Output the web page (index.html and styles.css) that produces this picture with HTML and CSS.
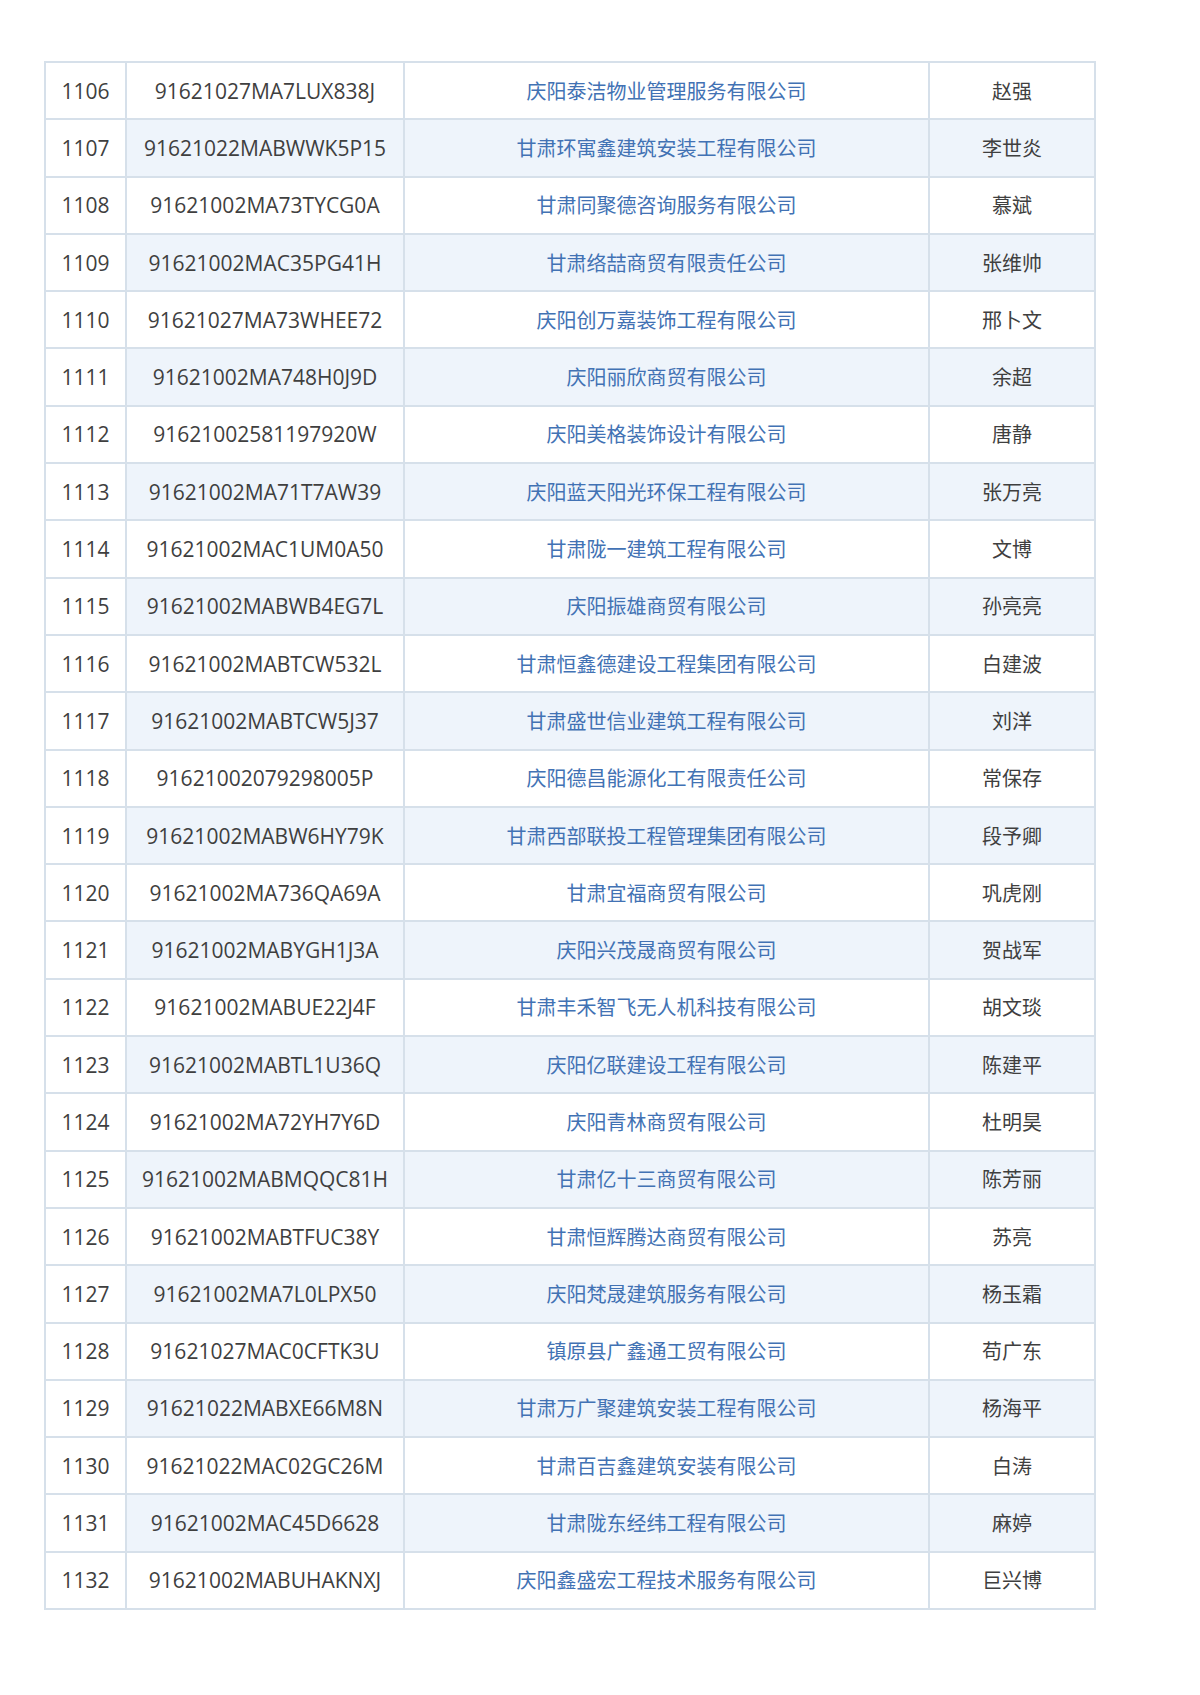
FILE: index.html
```html
<!DOCTYPE html>
<html lang="zh-CN">
<head>
<meta charset="utf-8">
<title>名单</title>
<link rel="stylesheet" href="styles.css">
</head>
<body>
<div class="page">
<table class="list">
<colgroup><col class="c-no"><col class="c-code"><col class="c-name"><col class="c-person"></colgroup>
<tbody>
<tr><td>1106</td><td>91621027MA7LUX838J</td><td class="co">庆阳泰洁物业管理服务有限公司</td><td class="pn">赵强</td></tr>
<tr><td>1107</td><td>91621022MABWWK5P15</td><td class="co">甘肃环寓鑫建筑安装工程有限公司</td><td class="pn">李世炎</td></tr>
<tr><td>1108</td><td>91621002MA73TYCG0A</td><td class="co">甘肃同聚德咨询服务有限公司</td><td class="pn">慕斌</td></tr>
<tr><td>1109</td><td>91621002MAC35PG41H</td><td class="co">甘肃络喆商贸有限责任公司</td><td class="pn">张维帅</td></tr>
<tr><td>1110</td><td>91621027MA73WHEE72</td><td class="co">庆阳创万嘉装饰工程有限公司</td><td class="pn">邢卜文</td></tr>
<tr><td>1111</td><td>91621002MA748H0J9D</td><td class="co">庆阳丽欣商贸有限公司</td><td class="pn">余超</td></tr>
<tr><td>1112</td><td>91621002581197920W</td><td class="co">庆阳美格装饰设计有限公司</td><td class="pn">唐静</td></tr>
<tr><td>1113</td><td>91621002MA71T7AW39</td><td class="co">庆阳蓝天阳光环保工程有限公司</td><td class="pn">张万亮</td></tr>
<tr><td>1114</td><td>91621002MAC1UM0A50</td><td class="co">甘肃陇一建筑工程有限公司</td><td class="pn">文博</td></tr>
<tr><td>1115</td><td>91621002MABWB4EG7L</td><td class="co">庆阳振雄商贸有限公司</td><td class="pn">孙亮亮</td></tr>
<tr><td>1116</td><td>91621002MABTCW532L</td><td class="co">甘肃恒鑫德建设工程集团有限公司</td><td class="pn">白建波</td></tr>
<tr><td>1117</td><td>91621002MABTCW5J37</td><td class="co">甘肃盛世信业建筑工程有限公司</td><td class="pn">刘洋</td></tr>
<tr><td>1118</td><td>91621002079298005P</td><td class="co">庆阳德昌能源化工有限责任公司</td><td class="pn">常保存</td></tr>
<tr><td>1119</td><td>91621002MABW6HY79K</td><td class="co">甘肃西部联投工程管理集团有限公司</td><td class="pn">段予卿</td></tr>
<tr><td>1120</td><td>91621002MA736QA69A</td><td class="co">甘肃宜福商贸有限公司</td><td class="pn">巩虎刚</td></tr>
<tr><td>1121</td><td>91621002MABYGH1J3A</td><td class="co">庆阳兴茂晟商贸有限公司</td><td class="pn">贺战军</td></tr>
<tr><td>1122</td><td>91621002MABUE22J4F</td><td class="co">甘肃丰禾智飞无人机科技有限公司</td><td class="pn">胡文琰</td></tr>
<tr><td>1123</td><td>91621002MABTL1U36Q</td><td class="co">庆阳亿联建设工程有限公司</td><td class="pn">陈建平</td></tr>
<tr><td>1124</td><td>91621002MA72YH7Y6D</td><td class="co">庆阳青林商贸有限公司</td><td class="pn">杜明昊</td></tr>
<tr><td>1125</td><td>91621002MABMQQC81H</td><td class="co">甘肃亿十三商贸有限公司</td><td class="pn">陈芳丽</td></tr>
<tr><td>1126</td><td>91621002MABTFUC38Y</td><td class="co">甘肃恒辉腾达商贸有限公司</td><td class="pn">苏亮</td></tr>
<tr><td>1127</td><td>91621002MA7L0LPX50</td><td class="co">庆阳梵晟建筑服务有限公司</td><td class="pn">杨玉霜</td></tr>
<tr><td>1128</td><td>91621027MAC0CFTK3U</td><td class="co">镇原县广鑫通工贸有限公司</td><td class="pn">苟广东</td></tr>
<tr><td>1129</td><td>91621022MABXE66M8N</td><td class="co">甘肃万广聚建筑安装工程有限公司</td><td class="pn">杨海平</td></tr>
<tr><td>1130</td><td>91621022MAC02GC26M</td><td class="co">甘肃百吉鑫建筑安装有限公司</td><td class="pn">白涛</td></tr>
<tr><td>1131</td><td>91621002MAC45D6628</td><td class="co">甘肃陇东经纬工程有限公司</td><td class="pn">麻婷</td></tr>
<tr><td>1132</td><td>91621002MABUHAKNXJ</td><td class="co">庆阳鑫盛宏工程技术服务有限公司</td><td class="pn">巨兴博</td></tr>
</tbody>
</table>
</div>
</body>
</html>
```

FILE: styles.css
```css
html, body {
  margin: 0;
  padding: 0;
  background: #ffffff;
}
.page {
  padding: 61px 0 0 44px;
  height: 1634px;
}
.list {
  border-collapse: collapse;
  table-layout: fixed;
  width: 1050px;
  font-family: "Open Sans", "Noto Sans CJK SC", sans-serif;
  font-size: 21px;
  color: #3f3f3f;
}
.c-no { width: 81px; }
.c-code { width: 278px; }
.c-name { width: 525px; }
.c-person { width: 166px; }
.list tr { height: 57.3px; }
.list td {
  border: 2px solid #d6e0ea;
  padding: 0;
  text-align: center;
  vertical-align: middle;
  white-space: nowrap;
  line-height: 24px;
}
.list td.co {
  font-family: "Noto Sans CJK SC", sans-serif;
  font-size: 20px;
  color: #4272b4;
}
.list td.pn {
  font-family: "Noto Sans CJK SC", sans-serif;
  font-size: 20px;
}
.list tr:nth-child(even) td:not(:first-child) {
  background: #eef4fb;
}
```
